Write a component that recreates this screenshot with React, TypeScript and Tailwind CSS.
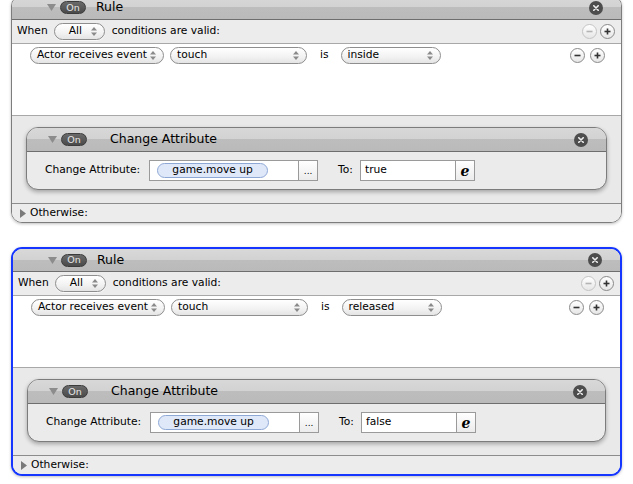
import React from "react";

const FONT = { fontFamily: '"DejaVu Sans", "Verdana", sans-serif' };

function Arrows() {
  return (
    <svg width="6" height="9" viewBox="0 0 6 9" className="shrink-0">
      <polygon points="3,0 6,3.5 0,3.5" fill="#8a8a8a" />
      <polygon points="0,5.5 6,5.5 3,9" fill="#8a8a8a" />
    </svg>
  );
}

function Popup({ label, width, pl = 7 }: { label: string; width: number; pl?: number }) {
  return (
    <div
      className="h-[17px] rounded-full border border-[#8e8e8e] bg-[linear-gradient(to_bottom,#ffffff,#f2f2f2_60%,#e4e4e4)] flex items-center pr-[7px] shrink-0 text-[10.7px] text-black shadow-[0_1px_0_rgba(255,255,255,0.7)]"
      style={{ width, paddingLeft: pl }}
    >
      <span className="leading-none">{label}</span>
      <span className="ml-auto flex items-center">
        <Arrows />
      </span>
    </div>
  );
}

function RoundBtn({ kind, disabled }: { kind: "+" | "-"; disabled?: boolean }) {
  const c = disabled ? "#b4b4b4" : "#333333";
  return (
    <div
      className={
        "w-[15px] h-[15px] rounded-full border flex items-center justify-center bg-[linear-gradient(to_bottom,#ffffff,#e6e6e6)] " +
        (disabled ? "border-[#c4c4c4]" : "border-[#8a8a8a]")
      }
    >
      <svg width="7" height="7" viewBox="0 0 7 7">
        <rect x="0.5" y="2.7" width="6" height="1.6" fill={c} />
        {kind === "+" && <rect x="2.7" y="0.5" width="1.6" height="6" fill={c} />}
      </svg>
    </div>
  );
}

function CloseBtn() {
  return (
    <div className="w-[14px] h-[14px] rounded-full bg-[#4d4d4d] flex items-center justify-center">
      <svg width="6" height="6" viewBox="0 0 6 6">
        <path d="M0.8 0.8 L5.2 5.2 M5.2 0.8 L0.8 5.2" stroke="#f0f0f0" strokeWidth="1.6" strokeLinecap="round" />
      </svg>
    </div>
  );
}

function DownTri() {
  return (
    <svg width="9" height="7" viewBox="0 0 9 7" className="shrink-0">
      <polygon points="0,0 9,0 4.5,7" fill="#8c8c8c" />
    </svg>
  );
}

function OnPill() {
  return (
    <div className="w-[26px] h-[13px] rounded-full bg-[linear-gradient(to_bottom,#6a6a6a,#4a4a4a)] border border-[#3c3c3c] flex items-center justify-center text-[9.5px] text-[#e6e6e6] leading-none">
      On
    </div>
  );
}

const HEADER_BG =
  "bg-[linear-gradient(to_bottom,#d8d8d8_0%,#d2d2d2_50%,#bdbdbd_50%,#bababa_100%)]";

function ActionPanel({ value }: { value: string }) {
  return (
    <div className="rounded-[12px] border border-[#7c7c7c] bg-[#ebebeb] overflow-hidden shadow-[0_2px_4px_rgba(0,0,0,0.3)] h-[63px] flex flex-col">
      <div className={"h-[24px] shrink-0 border-b border-[#6e6e6e] flex items-center pl-[21px] pr-[18px] " + HEADER_BG}>
        <DownTri />
        <div className="ml-[4px]">
          <OnPill />
        </div>
        <span className="ml-[23px] text-[12.5px] text-black">Change Attribute</span>
        <div className="ml-auto">
          <CloseBtn />
        </div>
      </div>
      <div className="flex-1 flex items-center pl-[18px] text-[10.7px] text-black">
        <span>Change Attribute:</span>
        <div className="ml-[9px] flex h-[21px]">
          <div className="w-[150px] h-full border border-[#9a9a9a] bg-white flex items-center pl-[7px]">
            <div className="w-[111px] h-[15px] rounded-full border border-[#8ea8d6] bg-[#dfe8f8] flex items-center justify-center">
              game.move up
            </div>
          </div>
          <div className="w-[19px] h-full border border-l-0 border-[#9a9a9a] bg-[linear-gradient(to_bottom,#ffffff,#ececec)] flex items-end justify-center pb-[4px] text-[9px] leading-none">
            ...
          </div>
        </div>
        <span className="ml-[20px]">To:</span>
        <div className="ml-[7px] flex h-[21px]">
          <div className="w-[96px] h-full border border-[#9a9a9a] bg-white flex items-center pl-[4px]">
            {value}
          </div>
          <div className="w-[19px] h-full border border-l-0 border-[#9a9a9a] bg-[linear-gradient(to_bottom,#ffffff,#ececec)] flex items-center justify-center">
            <span
              className="text-[14px] font-bold italic leading-none"
              style={{ fontFamily: '"DejaVu Serif", serif' }}
            >
              e
            </span>
          </div>
        </div>
      </div>
    </div>
  );
}

function RulePanel({
  selected,
  event,
  value,
  className,
}: {
  selected?: boolean;
  event: string;
  value: string;
  className?: string;
}) {
  return (
    <div
      className={
        "w-[611px] ml-[11px] rounded-[11px] overflow-hidden flex flex-col shadow-[0_1px_3px_rgba(0,0,0,0.25)] " +
        (selected ? "border-2 border-[#1436ff]" : "border border-[#7d7d7d] ") +
        " " +
        (className || "")
      }
    >
      <div
        className={
          "shrink-0 border-b border-[#6e6e6e] flex items-center pl-[35px] pr-[18px] " +
          HEADER_BG +
          (selected ? " h-[23px]" : " h-[24px]")
        }
      >
        <DownTri />
        <div className="ml-[4px]">
          <OnPill />
        </div>
        <span className="ml-[10px] text-[12.5px] text-black">Rule</span>
        <div className="ml-auto">
          <CloseBtn />
        </div>
      </div>
      <div className="h-[24px] shrink-0 bg-[#ececec] border-b border-[#a8a8a8] flex items-center pl-[5px] pr-[6px] text-[10.7px] text-black">
        <span>When</span>
        <div className="ml-[6px]">
          <Popup label="All" width={51} pl={14} />
        </div>
        <span className="ml-[7px]">conditions are valid:</span>
        <div className="ml-auto flex gap-[3px]">
          <RoundBtn kind="-" disabled />
          <RoundBtn kind="+" />
        </div>
      </div>
      <div className="h-[72px] shrink-0 bg-white border-b border-[#a8a8a8] pt-[3px] pl-[18px] pr-[16px]">
        <div className="flex items-center text-[10.7px] text-black">
          <Popup label="Actor receives event" width={134} pl={6} />
          <div className="ml-[6px]">
            <Popup label={"touch"} width={137} pl={6} />
          </div>
          <span className="ml-[13px]">is</span>
          <div className="ml-[12px]">
            <Popup label={event} width={100} pl={6} />
          </div>
          <div className="ml-auto flex gap-[5px]">
            <RoundBtn kind="-" />
            <RoundBtn kind="+" />
          </div>
        </div>
      </div>
      <div className="h-[88px] shrink-0 bg-[#e9e9e9] border-b border-[#8c8c8c] pt-[11px] px-[14px]">
        <ActionPanel value={value} />
      </div>
      <div className="h-[18px] shrink-0 bg-[#ececec] flex items-center pl-[8px] text-[10.7px] text-black">
        <svg width="6" height="9" viewBox="0 0 6 9" className="shrink-0">
          <polygon points="0,0 6,4.5 0,9" fill="#7a7a7a" />
        </svg>
        <span className="ml-[4px]">Otherwise:</span>
      </div>
    </div>
  );
}

export default function App() {
  return (
    <div className="w-[633px] h-[484px] bg-white overflow-hidden" style={FONT}>
      <RulePanel event="inside" value="true" className="mt-[-5px]" />
      <RulePanel selected event="released" value="false" className="mt-[24px]" />
    </div>
  );
}
